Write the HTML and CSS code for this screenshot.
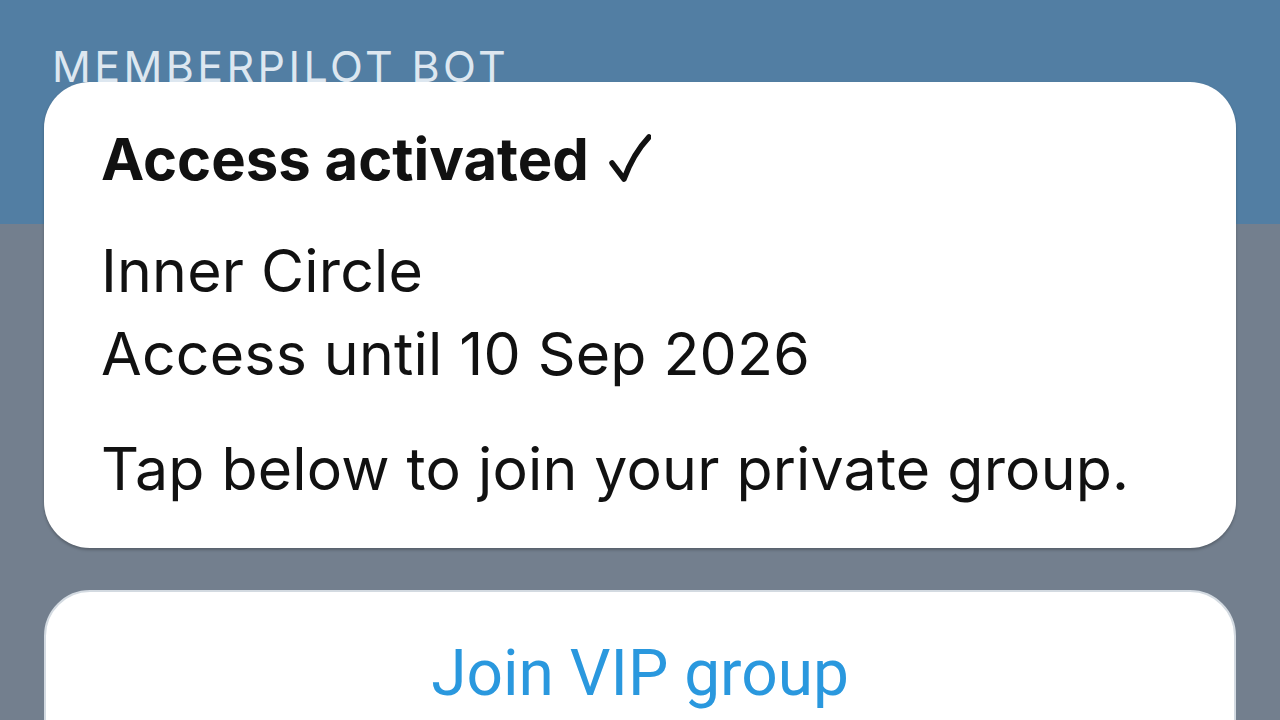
FILE: index.html
```html
<!DOCTYPE html>
<html lang="en">
<head>
    <meta charset="UTF-8">
    <meta name="viewport" content="width=device-width, initial-scale=1.0">
    <title>MemberPilot Bot</title>
    <link rel="stylesheet" href="styles.css">
</head>
<body>
    <div class="chat">
        <div class="bot-name">MEMBERPILOT BOT</div>
        <div class="message">
            <p class="title">Access activated <svg class="tick" width="42" height="48" viewBox="0 0 42 48"><path d="M3 29 L15 45 Q24 20 40 3" fill="none" stroke="#111" stroke-width="5.5" stroke-linecap="round" stroke-linejoin="round"/></svg></p>
            <p>Inner Circle<br>Access until 10 Sep 2026</p>
            <p>Tap below to join your private group.</p>
        </div>
        <button class="join">Join VIP group</button>
    </div>
</body>
</html>
```

FILE: styles.css
```css
body {
    margin: 0;
    height: 100vh;
    overflow: hidden;
    font-family: Inter, "Noto Sans", sans-serif;
    background: linear-gradient(#527ea3 0, #527ea3 224px, #737f8e 224px);
}
.chat {
    padding: 0 44px;
}
.bot-name {
    height: 82px;
    overflow: hidden;
    padding-left: 8px;
    box-sizing: border-box;
    padding-top: 41px;
    font-size: 43px;
    line-height: 50px;
    letter-spacing: 3.4px;
    color: #dde7f0;
}
.message {
    background: white;
    border-radius: 46px;
    padding: 36px 57px 38px;
    box-shadow: 0 2px 3px rgba(0, 0, 0, 0.25);
    color: #111;
    font-size: 59px;
    line-height: 83px;
    letter-spacing: 0.2px;
}
.message p {
    margin: 0 0 32px;
}
.message p:last-child {
    margin-bottom: 0;
}
.message .title {
    font-weight: 700;
    font-size: 58px;
    letter-spacing: 0;
    margin-bottom: 28px;
}
.tick {
    vertical-align: -2px;
    margin-left: 6px;
}
.join {
    display: block;
    width: 100%;
    margin-top: 42px;
    background: white;
    border: 2px solid #d3dae1;
    border-radius: 46px;
    padding: 50px 0 60px;
    font-family: Roboto, sans-serif;
    font-size: 64px;
    line-height: 64px;
    color: #2a98de;
}
```
